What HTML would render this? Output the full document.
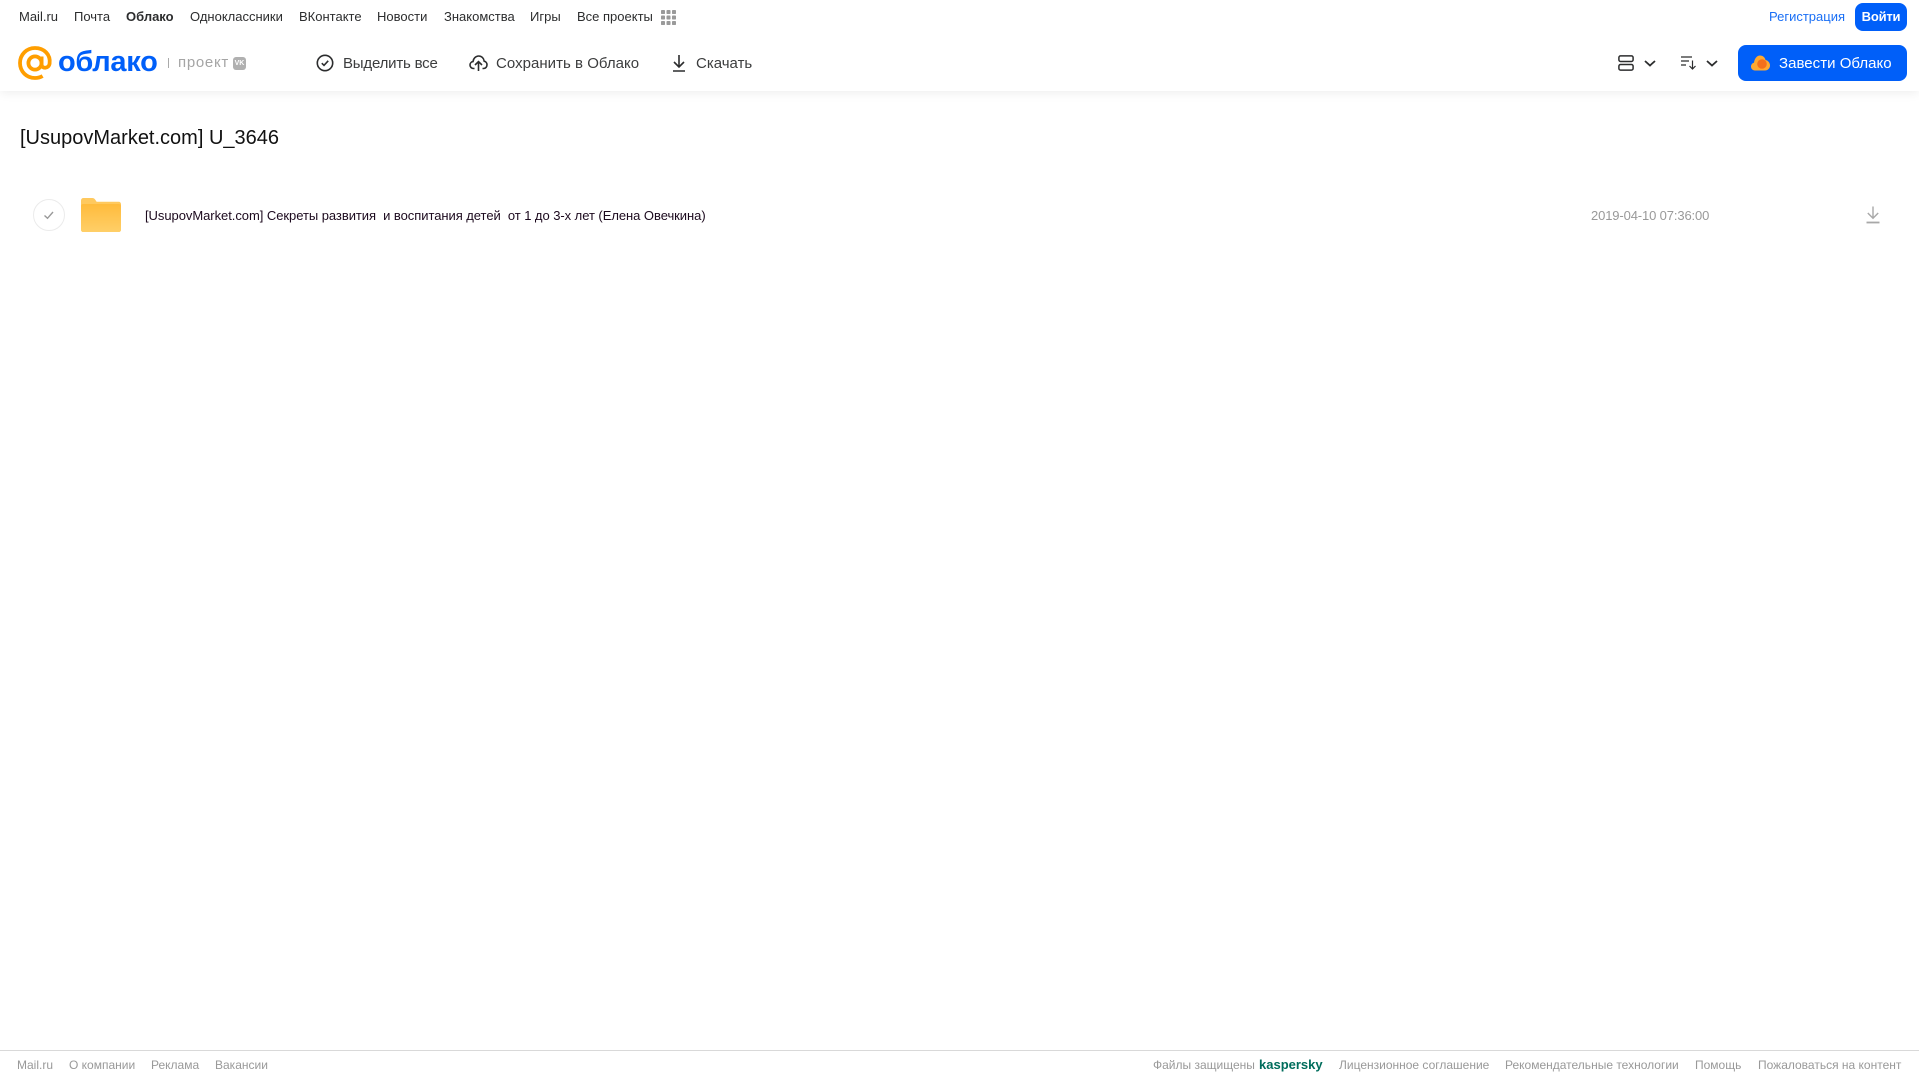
<!DOCTYPE html>
<html lang="ru"><head><meta charset="utf-8"><title>Облако</title>
<style>
html,body{margin:0;padding:0;background:#fff;width:1919px;height:1079px;overflow:hidden}
body{position:relative;font-family:"Liberation Sans","DejaVu Sans",sans-serif}
.t{position:absolute;white-space:pre;line-height:20px;height:20px}
.n{top:7px;font-size:13px;color:#2c2d2e}
.b{top:54px;font-size:15px;color:#3c3d3e}
.f{top:1055px;font-size:12px;color:#999}
svg{position:absolute;overflow:visible}
#hd{position:absolute;left:0;top:0;width:1919px;height:91px;background:#fff;box-shadow:0 2px 10px rgba(0,0,0,.07)}
</style></head><body>
<div id="hd"></div>
<span class="t n" style="left:19px">Mail.ru</span>
<span class="t n" style="left:74px">Почта</span>
<span class="t n" style="left:126px;font-weight:700">Облако</span>
<span class="t n" style="left:190px">Одноклассники</span>
<span class="t n" style="left:299px">ВКонтакте</span>
<span class="t n" style="left:377px">Новости</span>
<span class="t n" style="left:444px">Знакомства</span>
<span class="t n" style="left:530px">Игры</span>
<span class="t n" style="left:577px">Все проекты</span>
<svg style="left:661px;top:10px" width="15" height="15" fill="#9a9a9a"><rect width="4" height="4" rx=".8"/><rect x="5.5" width="4" height="4" rx=".8"/><rect x="11" width="4" height="4" rx=".8"/><rect y="5.5" width="4" height="4" rx=".8"/><rect x="5.5" y="5.5" width="4" height="4" rx=".8"/><rect x="11" y="5.5" width="4" height="4" rx=".8"/><rect y="11" width="4" height="4" rx=".8"/><rect x="5.5" y="11" width="4" height="4" rx=".8"/><rect x="11" y="11" width="4" height="4" rx=".8"/></svg>
<span class="t n" style="left:1769px;color:#1a6ff5">Регистрация</span>
<div style="position:absolute;left:1855px;top:3px;width:52px;height:28px;border-radius:8px;background:#005ff9;color:#fff;font-size:13px;font-weight:700;line-height:27px;text-align:center;letter-spacing:-.2px">Войти</div>

<svg style="left:18px;top:46px" width="34" height="34" viewBox="0 0 34 34" fill="none" stroke="#ff9e00" stroke-width="3.8"><circle cx="17" cy="17" r="6.6"/><path d="M23.6 10.5V18.5C23.6 23 30.8 23 31.6 17.5C32.8 8.5 26 2 17 2C8.5 2 2 8.6 2 17C2 25.6 8.6 32 17 32C20 32 22.4 31.3 24.6 30"/></svg>
<span class="t" style="left:58px;top:44px;height:36px;line-height:36px;font-size:29px;font-weight:700;color:#005ff9;letter-spacing:-.3px">облако</span>
<div style="position:absolute;left:168px;top:58px;width:1px;height:10px;background:#aaa"></div>
<span class="t" style="left:178px;top:53px;font-size:15px;color:#a5a5a5;letter-spacing:.7px">проект</span>
<div style="position:absolute;left:233px;top:57px;width:13px;height:13px;border-radius:3px;background:#b0b0b0;color:#fff;font-size:7px;font-weight:700;line-height:13px;text-align:center">VK</div>

<svg style="left:316px;top:54px" width="18" height="18" viewBox="0 0 18 18" fill="none" stroke="#2c2d2e" stroke-width="1.6"><circle cx="9" cy="9" r="7.7"/><path d="M5.8 9.2L8 11.4L12.2 6.8"/></svg>
<span class="t b" style="left:343px;letter-spacing:-.2px">Выделить все</span>
<svg style="left:469px;top:54px" width="19" height="18" viewBox="0 0 19 18" fill="none" stroke="#2c2d2e" stroke-width="1.6"><path d="M5.5 14.5H4.5C2.5 14.5 1 13 1 11C1 9 2.5 7.8 4 7.6C4.4 4.4 6.8 2 9.7 2C12.6 2 14.8 4.2 15.2 7.2C16.9 7.5 18 9 18 10.8C18 12.8 16.6 14.5 14.5 14.5H13.5"/><path d="M9.5 17V8M6 11L9.5 7.6L13 11"/></svg>
<span class="t b" style="left:496px;letter-spacing:.03px">Сохранить в Облако</span>
<svg style="left:671px;top:54px" width="16" height="18" viewBox="0 0 16 18" fill="none" stroke="#2c2d2e" stroke-width="1.6"><path d="M8 1V12.5M3 8L8 13L13 8M2 17H14"/></svg>
<span class="t b" style="left:696px">Скачать</span>

<svg style="left:1618px;top:55px" width="16" height="16" fill="none" stroke="#2c2d2e" stroke-width="1.5"><rect x=".9" y=".9" width="14.2" height="5.6" rx="1.6"/><rect x=".9" y="9.5" width="14.2" height="5.6" rx="1.6"/></svg>
<svg style="left:1644px;top:60px" width="12" height="7" fill="none" stroke="#2c2d2e" stroke-width="1.8"><path d="M1 1L6 5.5L11 1"/></svg>
<svg style="left:1681px;top:56px" width="16" height="14" fill="none" stroke="#2c2d2e" stroke-width="1.2"><path d="M0 1H11M0 5H8M0 9H5M11.5 4.5V13M8.5 10L11.5 13L14.5 10"/></svg>
<svg style="left:1706px;top:60px" width="12" height="7" fill="none" stroke="#2c2d2e" stroke-width="1.8"><path d="M1 1L6 5.5L11 1"/></svg>
<div style="position:absolute;left:1738px;top:45px;width:169px;height:36px;border-radius:8px;background:#005ff9"></div>
<svg style="left:1751px;top:55px" width="19" height="16" viewBox="0 0 19 16"><path d="M4 15.5C1.5 15.5 0 13.6 0 11.5C0 9.4 1.5 8 3 7.6C3.6 3.4 6 .5 9 .5C12 .5 14 2.5 14.5 5C17 5.5 19 7.6 19 10.4C19 13.4 16.8 15.5 14 15.5Z" fill="#ffa930"/><circle cx="11" cy="9" r="4.8" fill="#f4701c"/></svg>
<span class="t b" style="left:1779px;color:#fff;letter-spacing:.03px">Завести Облако</span>

<span class="t" style="left:20px;top:126px;height:24px;line-height:24px;font-size:20px;color:#111">[UsupovMarket.com] U_3646</span>

<svg style="left:33px;top:199px" width="32" height="32" fill="none"><circle cx="16" cy="16" r="15.5" stroke="#ebebeb"/><path d="M11.5 16.5L14.5 19.3L20 13" stroke="#999" stroke-width="1.4"/></svg>
<svg style="left:81px;top:198px" width="40" height="34" viewBox="0 0 41 34" preserveAspectRatio="none"><defs><linearGradient id="g" x1="0" y1="0" x2="0" y2="1"><stop offset="0" stop-color="#ffbb3c"/><stop offset="1" stop-color="#ffcf68"/></linearGradient></defs><path d="M0 2.5C0 1 1 0 2.5 0H11.5C13 0 14 .8 14.8 2L16 3.8H38.5C40 3.8 41 4.8 41 6.3V31.5C41 33 40 34 38.5 34H2.5C1 34 0 33 0 31.5Z" fill="#ffc95e"/><path d="M0 8C0 6.7 1 6 2.5 6H38.5C40 6 41 6.7 41 8V31.5C41 33 40 34 38.5 34H2.5C1 34 0 33 0 31.5Z" fill="url(#g)"/></svg>
<span class="t" style="left:145px;top:206px;font-size:13px;color:#1c0a1e;letter-spacing:-.05px">[UsupovMarket.com] Секреты развития  и воспитания детей  от 1 до 3-х лет (Елена Овечкина)</span>
<span class="t" style="left:1591px;top:206px;font-size:13px;color:#999;letter-spacing:-.13px">2019-04-10 07:36:00</span>
<svg style="left:1866px;top:206px" width="14" height="18" fill="none" stroke="#a8a8a8" stroke-width="1.4"><path d="M7 .5V12M1.8 7L7 12.2L12.2 7"/><path d="M.5 16.5H13.5" stroke-width="1.8"/></svg>

<div style="position:absolute;left:0;top:1050px;width:1919px;height:1px;background:#d9d9d9"></div>
<span class="t f" style="left:17px">Mail.ru</span>
<span class="t f" style="left:69px">О компании</span>
<span class="t f" style="left:151px">Реклама</span>
<span class="t f" style="left:215px">Вакансии</span>
<span class="t f" style="left:1153px">Файлы защищены</span>
<span class="t f" style="left:1259px;font-size:13px;font-weight:700;color:#006d5c">kaspersky</span>
<span class="t f" style="left:1339px">Лицензионное соглашение</span>
<span class="t f" style="left:1505px">Рекомендательные технологии</span>
<span class="t f" style="left:1695px">Помощь</span>
<span class="t f" style="left:1758px">Пожаловаться на контент</span>
</body></html>
